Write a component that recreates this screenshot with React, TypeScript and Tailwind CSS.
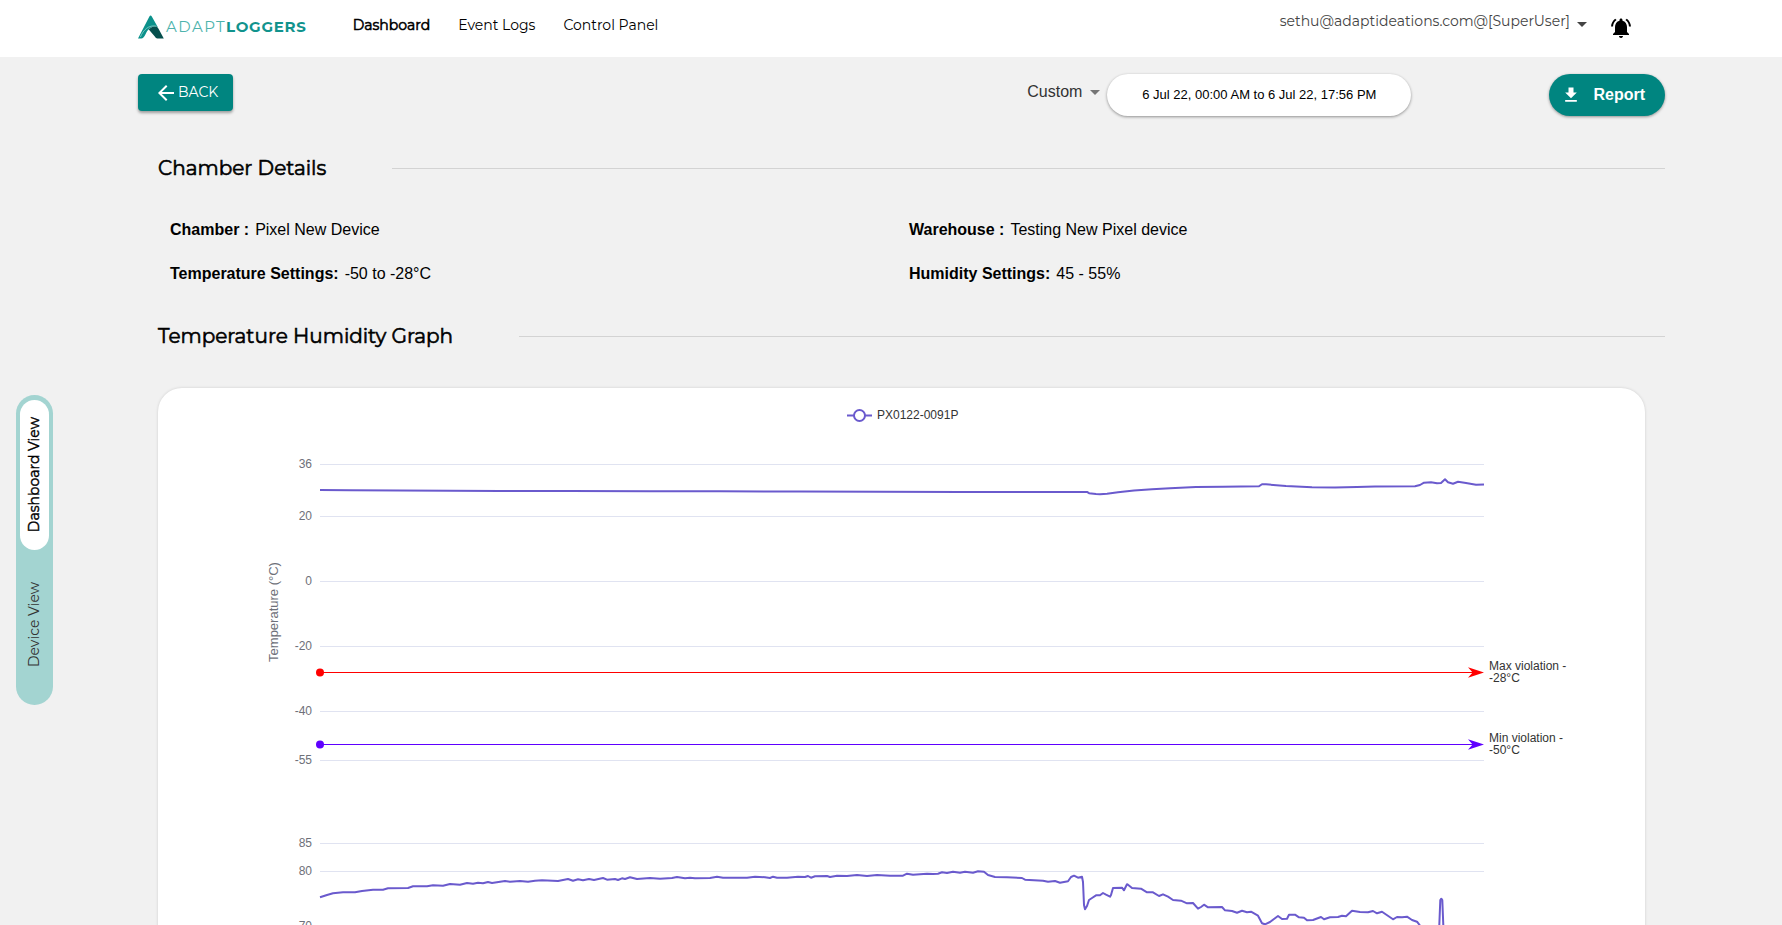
import {
  MdArrowBack,
  MdArrowDropDown,
  MdFileDownload,
  MdNotificationsActive,
} from "react-icons/md";

const NAV_LINKS = [
  { label: "Dashboard", href: "#dashboard", active: true },
  { label: "Event Logs", href: "#events", active: false },
  { label: "Control Panel", href: "#control", active: false },
];

const DETAILS = [
  { label: "Chamber :", value: "Pixel New Device" },
  { label: "Warehouse :", value: "Testing New Pixel device" },
  { label: "Temperature Settings:", value: "-50 to -28°C" },
  { label: "Humidity Settings:", value: "45 - 55%" },
];

// chart geometry, in viewBox units
const PLOT_WIDTH = 1164;
const TEMP_TICKS = [36, 20, 0, -20, -40, -55];
const HUMIDITY_TICKS = [85, 80, 70];
// half units keep the one-unit lines crisp
const snap = (y: number) => Math.floor(y) + 0.5;
const tempY = (v: number) => snap(76.5 + (36 - v) * 3.25);
const humidityY = (v: number) => snap(455.5 + (85 - v) * 5.5);

const LIMITS = [
  { name: "Max violation -", value: -28, color: "#ff0000" },
  { name: "Min violation -", value: -50, color: "#5f00ff" },
];

const TEMP_POINTS =
  "0,102 30,102.3 80,102.4 130,102.7 180,102.9 250,103 330,103.2 400,103.3 480,103.6 560,103.8 640,103.9 767,103.9 769,105.2 776,106 780,106.3 787,105.7 798,104.3 814,102.5 832,101.2 850,100.2 876,98.9 903,98.7 939,98.3 942,96.2 946,96.3 966,98 992,99.3 1015,99.5 1037,99 1055,98.6 1095,98.3 1100,97 1104,94.7 1111,94.2 1117,95.3 1121,95 1125,91.3 1128,94.3 1133,95.7 1138,93.8 1146,95 1156,96.7 1164,96.5";

const HUMIDITY_POINTS =
  "0,509.3 7,507 13,505.3 23,504.3 35,504.3 42,503 53,501.7 63,501.7 68,500.3 88,500 93,498.3 107,498.3 113,497.3 123,497.7 130,496 140,496.7 147,495 153,495.7 158,494.7 163,495.3 168,494 172,495 185,493 190,493.7 200,493 208,493.7 215,492.7 222,492.3 238,493 248,491 253,492.7 258,491.3 263,492.3 269,491 274,492 283,490 287,491.7 295,491 298,492 302,490.3 305,491 310,489.3 317,491 330,490 340,490.7 352,490 357,489 365,490.3 370,489.7 375,490.3 390,490 397,488.7 403,489.7 427,489.7 435,488.7 445,489.3 450,490 453,488.7 457,489.7 467,489.7 478,488.7 485,489 488,488 491,489.7 495,488.3 507,488 510,489 517,487.7 527,488 537,487 547,488 557,487 570,487.7 583,487.7 587,485.7 593,486.7 607,485.7 613,486 618,485.7 622,484.3 627,485 633,483.7 640,484.7 645,483.7 653,484.7 658,483.3 664,483.7 668,487 675,489 687,489.3 702,490 705,491.7 723,492.7 728,493.7 735,493 740,494.7 748,493.3 751,489 754,487.7 758,489.7 762,488.7 763,494 764,517 765,521.3 767,518 769,512 772,510 776,507.3 780,507.3 783,505 786,506.7 790,508.7 791,507 793,500 802,499.7 804,502.3 807,496.3 808,496.7 812,500 821,500.7 827,504.3 833,504.3 839,508 843,506.3 848,508.7 853,512 861,512.7 867,515.3 873,515 878,520.7 881,519 884,516.7 888,519.3 902,519 905,522.3 912,523 917,524.7 922,522.7 927,524.3 931,523.7 938,527.7 942,535.3 945,536.3 950,534 958,528 962,531 967,530.7 969,526.7 975,526.7 979,529.3 984,529.7 987,532.3 993,532 1001,529 1004,531.3 1010,529.3 1018,529 1022,527.7 1026,528.3 1032,522.7 1040,524 1048,524.3 1053,523 1057,525.3 1062,523.7 1073,531.3 1077,529 1082,529.3 1087,528.7 1092,532 1097,533.7 1100,537.5 1108,560 1118,560 1119.3,537 1120.3,512 1121.3,510.7 1122.3,512 1123.3,537 1125,560 1164,566";

function Logo() {
  return (
    <a href="#home" className="flex items-center gap-[2px]" aria-label="AdaptLoggers">
      <svg viewBox="0 0 26 24" className="h-6 w-[26px]" aria-hidden="true">
        <path d="M0 23.5 11.4 1.6Q12.6-.8 13.8 1.6L20 12.6C15.6 9.6 10.4 12.6 7.4 19.4Q5.4 23.5 3.4 23.5Z" fill="#0b918b" />
        <path d="M10.6 14.2Q17.6 8.8 20.4 13.4L25.8 23.5H19.4Q17.8 23.5 16.8 21.4Z" fill="#064f4d" />
        <path d="M2.4 22C5 15.4 10.6 9.4 18.6 11.2" fill="none" stroke="#8fd0cb" strokeWidth="0.8" />
      </svg>
      <span className="text-[15px] leading-5">
        <span className="tracking-widest text-[#4db3ad]">ADAPT</span>
        <span className="font-bold tracking-wider text-[#11938d]">LOGGERS</span>
      </span>
    </a>
  );
}

function SectionHeading({ title }: { title: string }) {
  return (
    <div className="ml-5 flex items-center gap-[66px]">
      <h2 className="font-['Montserrat','Open_Sans',sans-serif] text-xl leading-7 [-webkit-text-stroke:0.03em]">
        {title}
      </h2>
      <hr className="flex-1 border-[#d3d3d3]" />
    </div>
  );
}

function GridLine({ y, label }: { y: number; label: number }) {
  return (
    <g>
      <line x1="0" x2={PLOT_WIDTH} y1={y} y2={y} stroke="#e0e3f1" />
      <text x="-8" y={y + 3.5} textAnchor="end" fill="#6e7079">
        {label}
      </text>
    </g>
  );
}

function ClimateChart() {
  return (
    <svg
      viewBox="0 0 1487 760"
      className="block w-full font-['Liberation_Sans',Arial,sans-serif] text-[12px]"
      role="img"
      aria-label="Temperature and humidity"
    >
      {/* Legend */}
      <g stroke="#6a5acd" strokeWidth="2" fill="#fff">
        <path d="M689 27.5H714" />
        <circle cx="701.5" cy="27.5" r="5.5" />
      </g>
      <text x="719" y="31" fill="#333">
        PX0122-0091P
      </text>

      <text transform="translate(120 224) rotate(-90)" textAnchor="middle" fontSize="13" fill="#6e7079">
        Temperature (°C)
      </text>

      <g transform="translate(162 0)">
        {TEMP_TICKS.map((t) => (
          <GridLine key={t} y={tempY(t)} label={t} />
        ))}
        {HUMIDITY_TICKS.map((t) => (
          <GridLine key={t} y={humidityY(t)} label={t} />
        ))}

        {LIMITS.map((limit) => (
          <g key={limit.name} transform={`translate(0 ${tempY(limit.value)})`}>
            <line x1="0" x2={PLOT_WIDTH - 10} y1="0" y2="0" stroke={limit.color} />
            <circle r="4" fill={limit.color} />
            <path d={`M${PLOT_WIDTH} 0l-16-5.3 4.6 5.3-4.6 5.3z`} fill={limit.color} />
            <text x={PLOT_WIDTH + 5} y="-2.5" fill="#333">
              {limit.name}
            </text>
            <text x={PLOT_WIDTH + 5} y="9.5" fill="#333">
              {limit.value}°C
            </text>
          </g>
        ))}

        <g fill="none" stroke="#6a5acd" strokeWidth="2" strokeLinejoin="round">
          <polyline points={TEMP_POINTS} />
          <polyline points={HUMIDITY_POINTS} />
        </g>
      </g>
    </svg>
  );
}

function ViewSwitch() {
  return (
    <div className="flex flex-col rounded-full bg-[#a3d4d1] px-1 py-[5px] font-['Montserrat','Open_Sans',sans-serif] text-[14px]">
      <button
        type="button"
        className="flex h-[150px] w-[29px] items-center justify-center rounded-full bg-white [-webkit-text-stroke:0.03em]"
      >
        <span className="rotate-180 [writing-mode:vertical-rl]">Dashboard View</span>
      </button>
      <button type="button" className="flex h-[150px] w-[29px] items-center justify-center rounded-full text-[#333]">
        <span className="rotate-180 [writing-mode:vertical-rl]">Device View</span>
      </button>
    </div>
  );
}

export default function App() {
  return (
    <div className="h-screen overflow-hidden bg-[#f1f1f1] font-['Liberation_Sans',Arial,sans-serif] text-base text-black">
      <header className="flex h-[57px] items-center bg-white pr-[149px] pb-1 pl-[138px] font-['Montserrat','Open_Sans',sans-serif] text-[14px]">
        <Logo />
        <nav className="ml-[46px] flex gap-7 pb-[2px]">
          {NAV_LINKS.map((link) => (
            <a key={link.label} href={link.href} className={link.active ? "[-webkit-text-stroke:0.04em]" : ""}>
              {link.label}
            </a>
          ))}
        </nav>
        <button type="button" className="ml-auto flex items-center pb-[10px] text-[#444]">
          {"sethu@adaptideations.com@[SuperUser]"}
          <MdArrowDropDown size={24} className="mt-1" />
        </button>
        <button type="button" aria-label="Notifications" className="ml-[15px] pt-[2px]">
          <MdNotificationsActive size={24} />
        </button>
      </header>

      <div className="flex">
        <aside className="w-[138px] shrink-0 pt-[338px] pl-4">
          <div className="flex">
            <ViewSwitch />
          </div>
        </aside>

        <main className="min-w-0 flex-1 pt-[17px] pr-[117px]">
          {/* Toolbar */}
          <div className="flex items-start">
            <button
              type="button"
              className="flex h-[37px] items-center rounded bg-[#008580] pr-[15px] pl-4 font-['Montserrat','Open_Sans',sans-serif] text-[14px] text-white shadow-[0_2px_3px_rgba(0,0,0,0.35)]"
            >
              <MdArrowBack size={24} />
              BACK
            </button>
            <label className="ml-auto flex h-9 items-center text-[#333]">
              <select aria-label="Period" className="appearance-none bg-transparent" defaultValue="Custom">
                <option>Custom</option>
              </select>
              <MdArrowDropDown size={24} className="text-[#757575]" />
            </label>
            <button
              type="button"
              className="h-[42px] rounded-full bg-white px-[35px] text-[13px] shadow-[0_1px_3px_rgba(0,0,0,0.4)]"
            >
              6 Jul 22, 00:00 AM to 6 Jul 22, 17:56 PM
            </button>
            <button
              type="button"
              className="ml-[138px] flex h-[42px] items-center gap-3 rounded-full bg-[#008580] pr-5 pl-3 font-bold text-white shadow-[0_1px_3px_rgba(0,0,0,0.4)]"
            >
              <MdFileDownload size={20} />
              Report
            </button>
          </div>

          <section className="mt-[38px]">
            <SectionHeading title="Chamber Details" />
            <dl className="mt-9 mr-[17px] ml-8 grid grid-cols-2 gap-y-5">
              {DETAILS.map((d) => (
                <div key={d.label} className="flex gap-[6px]">
                  <dt className="font-bold">{d.label}</dt>
                  <dd>{d.value}</dd>
                </div>
              ))}
            </dl>
          </section>

          <section className="mt-9">
            <SectionHeading title="Temperature Humidity Graph" />
            <div className="mx-5 mt-[38px] overflow-hidden rounded-3xl bg-white shadow-[0_0_3px_rgba(0,0,0,0.15)]">
              <ClimateChart />
            </div>
          </section>
        </main>
      </div>
    </div>
  );
}
